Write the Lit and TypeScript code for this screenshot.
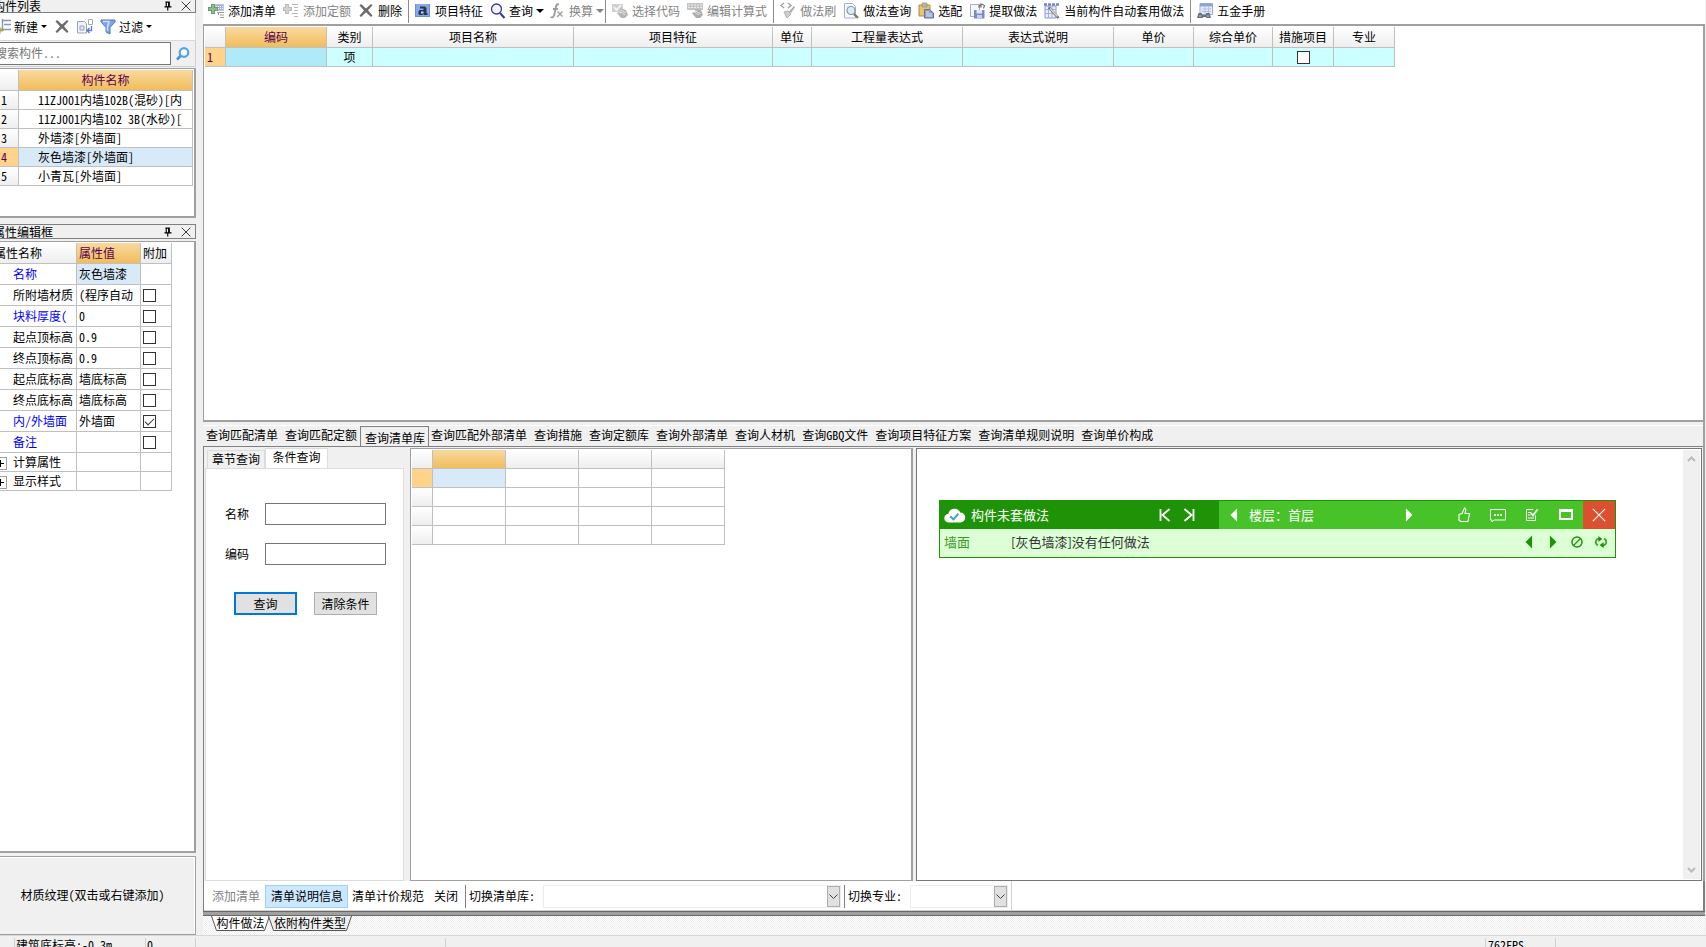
import { LitElement, html, svg, css, nothing } from "lit";
import { customElement, property, state } from "lit/decorators.js";
import { classMap } from "lit/directives/class-map.js";

const baseText = css`
  :host {
    font: 12px/16px "Noto Sans Mono CJK SC", "Noto Sans CJK SC", sans-serif;
    color: #000;
  }
  *, *::before, *::after { box-sizing: border-box; }
  button, input, select { font: inherit; color: inherit; margin: 0; padding: 0; border-radius: 0; outline: none; }
  button { background: none; border: 0; white-space: nowrap; }
`;

const caret = svg`<path d="M0 0H8L4 4Z" fill="currentColor"/>`;
const cross = svg`<path d="M1.500 2.500L3 1l5 4.500L13 1l1.500 1.300L10 7.300l4.500 5.200L13 14 8 9.300 3 14l-1.500-1.300L6 7.500Z" fill="#6b6b6b"/>`;

const icons: Record<string, unknown> = {
  addList: svg`<path d="M7 1h9v7H7z" fill="#b9c6e6"/><path d="M8 2h7v5H8z" fill="#a4b2dc"/><path d="M8 3.500h7M8 5.500h7" stroke="#eef2fb" stroke-dasharray="1 1"/><path d="M3 1h4v3h3v4H7v3H3V8H0V4h3z" fill="#6b9a6b"/><path d="M4 2h2v3h3v2H6v3H4V7H1V5h3z" fill="#8cc088"/><path d="M9 9.500h7M12 12h4M12 14.500h4M10.500 9v3" stroke="#9a9a9a"/>`,
  addQuota: svg`<path d="M2 1h4v3h3v4H6v3H2V8H0V4h2z" fill="#bdbdbd"/><path d="M3 2h2v3h3v2H5v3H3V7H1V5h2z" fill="#d2d2d2"/><path d="M9 1.500h6M11 4.500h4M11 7.500h4M9 10.500h6M11 13.500h4" stroke="#b8b8b8"/>`,
  cross,
  feature: svg`<path d="M0 1h15v13H0z" fill="#6d8fe0"/><path d="M1 1h13v12H1z" fill="#86a8f0"/><path d="M5 3.500h5l1.500 1.500v5h1v2H9l-.5-1-1 1H4.500L3.500 11V8.500L4.500 7H8.500V5.500H5z" fill="#2d3547"/><path d="M6 8.500h2.500v2H6z" fill="#cfdcfa"/>`,
  search: svg`<circle cx="6.500" cy="6" r="5" fill="#f4f5ff" stroke="#3b3a9c" stroke-width="1.300"/><path d="M10 10l4.500 5" stroke="#3b3a9c" stroke-width="2"/>`,
  fx: svg`<path d="M9 1.500C6.500.5 6 3 5.500 6L4.500 11c-.5 3-2 4-4 3M3 6h5" stroke="#9a9a9a" stroke-width="1.800" fill="none"/><path d="M7.500 8.500l5 5M12.500 8.500L7 14" stroke="#a5a5a5" stroke-width="1.600"/>`,
  pick: svg`<path d="M0 1h11v8H0z" fill="#d0d0d0"/><path d="M2 4l2.500 3L9 2" stroke="#f7f7f7" stroke-width="1.500" fill="none"/><path d="M8 5l6 2 2 5-3 3H9L5 10l2-1 2 1.500z" fill="#b4b4b4"/><path d="M9 7l5 3M9 9l4 3" stroke="#e6e6e6"/>`,
  editExpr: svg`<path d="M0 0h16v7H0z" fill="#c4c4c4"/><path d="M1 2h14M1 4.500h14" stroke="#efefef" stroke-dasharray="2 1"/><path d="M8 6l6 1 2 5-3 3H9L5 10l2-1 2 1z" fill="#adadad"/><path d="M9 8l5 3M9 10l3 2" stroke="#e0e0e0"/>`,
  brush: svg`<path d="M4 0L1 2.500 4 5M8 0l3 2.500L8 5" stroke="#a6a6a6" stroke-width="1.500" fill="none"/><path d="M14 3l1 1-4 6-2-1.500z" fill="#a9a9a9"/><path d="M4 9l4-1 3 3-4 4z" fill="#cdcdcd" stroke="#adadad"/>`,
  docSearch: svg`<path d="M1.500.5h8l3 3V15h-11z" fill="#fff" stroke="#9db0d0"/><path d="M3 4h6" stroke="#c4d3e8"/><circle cx="8" cy="7.500" r="4" fill="#d9ecfa" stroke="#8695ab" stroke-width="1.200"/><path d="M11 11l4 4" stroke="#8a7752" stroke-width="2.400"/>`,
  paste: svg`<path d="M1 2h11v11H1z" fill="#e6c56c" stroke="#b08c3e"/><path d="M4 0h5v4H4z" fill="#b5b5b5" stroke="#888" stroke-width=".6"/><path d="M6.500 6.500h5l4 3.500V15h-9z" fill="#8f9bc0" stroke="#66749b"/><path d="M8 9h3M8 11h6M8 13h6" stroke="#e6ecf9"/>`,
  extract: svg`<path d="M1.500 1.500h9v12h-9z" fill="#f6f8fd" stroke="#a2aed0"/><path d="M5 7h10.500v8.500H5z" fill="#7f86cf"/><path d="M7.500 7H13v3.500H7.500z" fill="#e5e8fb"/><path d="M8 12h5v3.500H8z" fill="#c8cdf2"/><path d="M9 4h3V1l3.500 1.500-1 3M12 1.500L9.500 3" stroke="#777" stroke-width="1.200" fill="none"/>`,
  auto: svg`<path d="M1 3h11v12H1z" fill="#e9eefb" stroke="#8c98cc"/><path d="M4.500 3v12M8 3v12M1 6.500h11M1 10.500h11" stroke="#a3add9"/><path d="M0 1.500h15" stroke="#7883be" stroke-width="2.500" stroke-dasharray="3 1"/><path d="M5 4.500l9.500 10.500" stroke="#5a6490" stroke-width="2.600"/><path d="M6 5.500l7.500 8" stroke="#efdfa6" stroke-width="1.400"/>`,
  manual: svg`<path d="M3 .5h12.500v11H3z" fill="#e6ecf7" stroke="#9dafd4"/><path d="M3 .5h12.500v3H3z" fill="#8da4d8"/><path d="M5 6h9M5 8.500h9M8 4v7M11.500 4v7" stroke="#b4c1dd"/><path d="M0 15l1.500-5h3l1 2h3l1-2h3l1.500 5H9.500l-1-1h-2l-1 1z" fill="#66707c"/><path d="M2 13h2.500M9.500 13H12" stroke="#c5ced8"/>`,
  newItem: svg`<path d="M7 1.500h9M9 5.500h7M7 10.500h9M7.500 0v11" stroke="#8199bb" stroke-width="1.400"/><path d="M3 8h2v2h3v2H5v3H3v-3H0v-2h3z" fill="#d1b93c" stroke="#93832a" stroke-width=".7"/>`,
  copyItem: svg`<path d="M.5 2.500h7l2 2V14h-9z" fill="#eef1f7" stroke="#98a3b8"/><path d="M3 7h4v4H3z" fill="#dfe5f0" stroke="#9aa6bd"/><path d="M11.500.5h4v5h-4z" fill="#fff" stroke="#a2acc2"/><path d="M14.500 7v4.500h-4M12.500 9L10 11.500l2.500 2.500" stroke="#5f78cc" stroke-width="1.300" fill="none"/>`,
  filter: svg`<path d="M1 1h14v2L10 8.500V15l-4-2V8.500L1 3z" fill="#7fa3ea" stroke="#5577c4"/><path d="M3 2.500h6L7.500 8v4" stroke="#cfe0ff" stroke-width="1.500" fill="none"/>`,
  find: svg`<circle cx="9" cy="6.500" r="4.300" fill="#f4faff" stroke="#4fa6e4" stroke-width="2.200"/><path d="M5.500 10L2 13.500" stroke="#4494d8" stroke-width="2.600"/>`,
  pin: svg`<path d="M5 3.500h5M6 3v6M9.500 3v6M8.700 3v6M4 9h8M7.700 9v4" stroke="#000" stroke-width="1.300"/>`,
  close: svg`<path d="M3 3l10 10M13 3L3 13" stroke="#222" stroke-width="1"/>`,
  cloud: svg`<path d="M4 14a3.500 3.500 0 01-.5-7 5 5 0 019.500-1A4 4 0 0113 14z" fill="#fff"/><path d="M5 9l2.500 2.500L11.500 7" stroke="#3aa0dc" stroke-width="1.600" fill="none"/>`,
  first: svg`<path d="M3.500 2v12M12.500 2l-7 6 7 6" stroke="#fff" stroke-width="1.800" fill="none"/>`,
  last: svg`<path d="M12.500 2v12M3.500 2l7 6-7 6" stroke="#fff" stroke-width="1.800" fill="none"/>`,
  left: svg`<path d="M11.500.5v15L4 8z" fill="currentColor"/>`,
  right: svg`<path d="M4.500.5v15L12 8z" fill="currentColor"/>`,
  thumb: svg`<path d="M3 7.500l3-1L8.500 1c1.500 0 1.700 1.500.5 5.500h4.500L12 14.500H4.500L3 13z" fill="none" stroke="#fff" stroke-width="1.100"/>`,
  chat: svg`<path d="M.5 2.500h15v10.500H4l-2 2V13H.5z" fill="none" stroke="#fff"/><path d="M4 8h2M7 8h2M10 8h2" stroke="#fff" stroke-width="1.400"/>`,
  note: svg`<path d="M9 2.500H2.500v11h9V8.500" fill="none" stroke="#fff"/><path d="M4 5.500h3M4 8h2.500M4 11h6" stroke="#fff"/><path d="M7 6l2 2.500L13.500 2.500" stroke="#fff" stroke-width="1.800" fill="none"/>`,
  max: svg`<path d="M2 3.500h12v8.500H2z" fill="none" stroke="#fff" stroke-width="2"/><path d="M1 3.500h14" stroke="#fff" stroke-width="3"/>`,
  exit: svg`<path d="M1 1l14 14M15 1L1 15" stroke="#fff" stroke-width="1.300"/>`,
  ban: svg`<circle cx="8" cy="8" r="5.800" fill="none" stroke="#1f9307" stroke-width="1.700"/><path d="M4 12l8-8" stroke="#1f9307" stroke-width="1.500"/>`,
  refresh: svg`<path d="M4.500 12C.5 9.500 1.500 4.500 6 4M11.500 4c4 2.500 3 7.500-1.500 8" fill="none" stroke="#3fa32b" stroke-width="2"/><path d="M5 1l4.500 3.500L5 8zM11 8l-4.500 3.500L11 15z" fill="#1f9307"/>`,
};

@customElement("ui-icon")
export class UiIcon extends LitElement {
  @property() name = "";
  static styles = css`
    :host { display: inline-flex; flex: none; width: 16px; height: 16px; }
    svg { width: 100%; height: 100%; display: block; overflow: visible; }
  `;
  render() {
    return html`<svg viewBox="0 0 16 16" aria-hidden="true">${icons[this.name]}</svg>`;
  }
}

interface Tool { icon: string; label: string; off?: boolean; menu?: boolean; sep?: boolean; }

@customElement("main-toolbar")
export class MainToolbar extends LitElement {
  private tools: Tool[] = [
    { icon: "addList", label: "添加清单" },
    { icon: "addQuota", label: "添加定额", off: true },
    { icon: "cross", label: "删除", sep: true },
    { icon: "feature", label: "项目特征" },
    { icon: "search", label: "查询", menu: true },
    { icon: "fx", label: "换算", off: true, menu: true, sep: true },
    { icon: "pick", label: "选择代码", off: true },
    { icon: "editExpr", label: "编辑计算式", off: true, sep: true },
    { icon: "brush", label: "做法刷", off: true },
    { icon: "docSearch", label: "做法查询" },
    { icon: "paste", label: "选配" },
    { icon: "extract", label: "提取做法" },
    { icon: "auto", label: "当前构件自动套用做法", sep: true },
    { icon: "manual", label: "五金手册" },
  ];
  static styles = [baseText, css`
    :host { display: flex; align-items: center; height: 24px; padding: 0 0 2px 5px; background: #fff; overflow: hidden; }
    button { display: flex; align-items: center; gap: 4px; margin-right: 7px; }
    button:disabled { color: #838383; }
    .menu { width: 8px; height: 4px; }
    .menued { gap: 3px; margin-right: 6px; }
    .menued.last { margin-right: 2px; }
    .sep { width: 1px; height: 24px; background: #8c8c8c; margin: 0 6px 0 -1px; flex: none; }
  `];
  render() {
    return this.tools.map((t) => html`
      <button class=${classMap({ menued: !!t.menu, last: !!t.sep })} ?disabled=${t.off}>
        <ui-icon name=${t.icon}></ui-icon><span>${t.label}</span>
        ${t.menu ? html`<svg class="menu" viewBox="0 0 8 4">${caret}</svg>` : nothing}
      </button>
      ${t.sep ? html`<span class="sep"></span>` : nothing}`);
  }
}

const gridStyles = css`
  table { border-collapse: separate; border-spacing: 0; table-layout: fixed; }
  th, td { padding: 0; font-weight: normal; white-space: nowrap; overflow: hidden; border: solid #c0c0c0; border-width: 0 1px 1px 0; }
  th { background: linear-gradient(#fff, #eee); }
  .hot { background: linear-gradient(#f9d9a0, #f1bd5b); color: #5a0050; }
  .cur { background: #ffd38c; color: #5a0050; }
  .sel { background: #d8e9f8; }
  .tick { appearance: none; display: block; width: 13px; height: 13px; border: 1px solid #333; background: #fff; }
  .tick:checked::after { content: ""; display: block; width: 9px; height: 5px; margin: 2px 1px; border: solid #333; border-width: 0 0 1px 1px; transform: rotate(-45deg); }
`;

@customElement("side-panels")
export class SidePanels extends LitElement {
  private parts = ["11ZJ001内墙102B(混砂)[内", "11ZJ001内墙102 3B(水砂)[", "外墙漆[外墙面]", "灰色墙漆[外墙面]", "小青瓦[外墙面]"];
  private props: { name: string; value?: string; blue?: boolean; tick?: boolean; on?: boolean; group?: boolean }[] = [
    { name: "名称", value: "灰色墙漆", blue: true },
    { name: "所附墙材质", value: "(程序自动", tick: true },
    { name: "块料厚度(", value: "0", blue: true, tick: true },
    { name: "起点顶标高", value: "0.9", tick: true },
    { name: "终点顶标高", value: "0.9", tick: true },
    { name: "起点底标高", value: "墙底标高", tick: true },
    { name: "终点底标高", value: "墙底标高", tick: true },
    { name: "内/外墙面", value: "外墙面", blue: true, tick: true, on: true },
    { name: "备注", blue: true, tick: true },
    { name: "计算属性", group: true },
    { name: "显示样式", group: true },
  ];
  @state() private current = 3;
  static styles = [baseText, gridStyles, css`
    :host { display: flex; flex-direction: column; background: #f0f0f0; min-height: 0; }
    .title { display: flex; align-items: center; height: 15px; margin-top: 6px; border: 1px solid #7f7f7f; border-left: 0; flex: none; }
    .title.top { height: 13px; margin-top: 0; border-top: 0; }
    .title h2 { flex: 1; margin: 0; font: inherit; line-height: 12px; padding-left: 1px; }
    .title button { width: 18px; height: 12px; display: flex; justify-content: center; align-items: center; }
    .title ui-icon { width: 14px; height: 14px; }
    .tools { display: flex; align-items: center; height: 28px; padding-left: 3px; background: #fff; border-bottom: 1px solid #d9d9d9; border-right: 1px solid #d9d9d9; flex: none; }
    .tools button { display: flex; align-items: center; gap: 3px; margin-right: 7px; }
    .menu { width: 6px; height: 3px; }
    .find { display: flex; height: 26px; border: solid #d0d0d0; border-width: 0 1px 1px 0; flex: none; padding: 1px 0; }
    .find input { flex: 1; min-width: 0; border: 1px solid #767676; background: #fff; padding: 0 2px 2px; }
    .find input::placeholder { color: #767676; opacity: 1; }
    .find button { width: 24px; display: flex; align-items: center; justify-content: center; }
    .frame { background: #fff; border: solid #a0a0a0; border-width: 1px 2px 2px 0; overflow: hidden; }
    .list { height: 150px; margin-top: 1px; flex: none; padding-top: 1px; }
    .props { flex: 1; min-height: 0; margin: 2px 0 3px; padding-top: 1px; }
    .list table { width: 201px; }
    .list tr { height: 19px; }
    .list thead tr { height: 21px; }
    .list td:first-child { padding-left: 9px; background: linear-gradient(#fff, #eee); }
    .list td:first-child.cur { background: #ffd38c; }
    .list td + td { padding-left: 19px; }
    .list th:first-child, .list td:first-child { width: 27px; }
    .props table { width: 180px; }
    .props tr { height: 21px; }
    .props tr.group { height: 19px; }
    .props th { text-align: left; padding-left: 2px; }
    .props td { padding-left: 21px; }
    .props td + td { padding-left: 2px; }
    .blue { color: #00f; }
    .exp { display: inline-block; width: 13px; height: 13px; margin: 0 6px 0 -19px; border: 1px solid #a0a0a0; vertical-align: middle; background: linear-gradient(#000, #000) center / 7px 1px no-repeat, linear-gradient(#000, #000) center / 1px 7px no-repeat; }
    .texture { height: 79px; border: 1px solid #a0a0a0; border-left: 0; flex: none; background: #f0f0f0; box-shadow: inset 0 1px #fff, inset -1px 0 #fff; padding: 0 2px 2px 0; }
  `];
  render() {
    const title = (text: string, top = false) => html`
      <div class="title ${top ? "top" : ""}"><h2>${text}</h2>
        <button aria-label="固定"><ui-icon name="pin"></ui-icon></button>
        <button aria-label="关闭"><ui-icon name="close"></ui-icon></button></div>`;
    const menu = html`<svg class="menu" viewBox="0 0 8 4">${caret}</svg>`;
    return html`
      ${title("构件列表", true)}
      <div class="tools">
        <button><ui-icon name="newItem"></ui-icon>新建${menu}</button>
        <button aria-label="删除"><ui-icon name="cross"></ui-icon></button>
        <button aria-label="复制"><ui-icon name="copyItem"></ui-icon></button>
        <button><ui-icon name="filter"></ui-icon>过滤${menu}</button>
      </div>
      <div class="find">
        <input type="text" placeholder="搜索构件..." aria-label="搜索构件" />
        <button aria-label="搜索"><ui-icon name="find"></ui-icon></button>
      </div>
      <div class="frame list"><table>
        <thead><tr><th></th><th class="hot">构件名称</th></tr></thead>
        <tbody>${this.parts.map((p, i) => html`<tr @click=${() => (this.current = i)}>
          <td class=${classMap({ cur: i === this.current })}>${i + 1}</td>
          <td class=${classMap({ sel: i === this.current })}>${p}</td></tr>`)}</tbody>
      </table></div>
      ${title("属性编辑框")}
      <div class="frame props"><table>
        <colgroup><col width="85" /><col width="64" /><col width="31" /></colgroup>
        <thead><tr><th>属性名称</th><th class="hot">属性值</th><th>附加</th></tr></thead>
        <tbody>${this.props.map((p, i) => html`<tr class=${classMap({ group: !!p.group })}>
          <td class=${classMap({ blue: !!p.blue })}>${p.group ? html`<span class="exp"></span>` : nothing}${p.name}</td>
          <td class=${classMap({ sel: i === 0 })}>${p.value ?? nothing}</td>
          <td>${p.tick ? html`<input class="tick" type="checkbox" aria-label=${p.name} .checked=${!!p.on} />` : nothing}</td>
        </tr>`)}</tbody>
      </table></div>
      <button class="texture">材质纹理(双击或右键添加)</button>`;
  }
}

@customElement("bill-grid")
export class BillGrid extends LitElement {
  private cols: [string, number][] = [["编码", 101], ["类别", 46], ["项目名称", 201], ["项目特征", 199], ["单位", 39], ["工程量表达式", 151], ["表达式说明", 151], ["单价", 80], ["综合单价", 79], ["措施项目", 61], ["专业", 61]];
  static styles = [baseText, gridStyles, css`
    :host { display: block; background: #fff; border: solid #a0a0a0; border-width: 2px 2px 2px 1px; padding: 1px; overflow: hidden; min-height: 0; }
    table { width: 1190px; }
    tr { height: 19px; text-align: center; }
    thead tr { height: 21px; }
    td { background: #ccffff; }
    td.cur { background: #ffd38c; text-align: left; padding-left: 2px; }
    td.code { background: #aeeaf8; }
    .tick { margin: auto; }
  `];
  render() {
    return html`<table>
      <colgroup><col width="21" />${this.cols.map((c) => html`<col width=${c[1]} />`)}</colgroup>
      <thead><tr><th></th>${this.cols.map((c, i) => html`<th class=${i ? "" : "hot"}>${c[0]}</th>`)}</tr></thead>
      <tbody><tr><td class="cur">1</td>${this.cols.map((c, i) => html`<td class=${i ? "" : "code"}>${
        i === 1 ? "项" : i === 9 ? html`<input class="tick" type="checkbox" aria-label="措施项目" />` : nothing}</td>`)}</tr></tbody>
    </table>`;
  }
}

@customElement("check-window")
export class CheckWindow extends LitElement {
  static styles = [baseText, css`
    :host { display: block; border: 1px solid #1f9307; background: #dcffd5; font-family: "Noto Sans CJK SC", sans-serif; font-size: 13px; color: #333; }
    .bar { display: flex; height: 28px; background: #48c229; color: #fff; align-items: stretch; }
    .name { display: flex; align-items: center; flex: 0 0 279px; background: #1f9307; padding: 0 18px 0 4px; }
    .name ui-icon { width: 20px; height: 20px; margin-right: 7px; }
    .grow { flex: 1; }
    .bar button, .row button { display: flex; align-items: center; justify-content: center; width: 24px; }
    .floor { display: flex; flex: 1; align-items: center; padding-left: 3px; min-width: 0; }
    .floor span { flex: 0 0 151px; padding-left: 3px; }
    .acts { display: flex; }
    .acts button { width: 34px; }
    .acts .exit { width: 32px; background: #dc5030; }
    .name .nav ui-icon { width: 16px; height: 16px; margin: 0; }
    .row { display: flex; align-items: center; height: 28px; padding: 0 2px 2px 4px; }
    .row b { font-weight: normal; color: #3c9a2a; flex: 0 0 67px; }
    .row button { color: #1f9307; }
    .row ui-icon, .floor ui-icon, .exit ui-icon { width: 14px; height: 14px; }
  `];
  render() {
    const b = (icon: string, label: string, cls = "") => html`<button class=${cls} aria-label=${label}><ui-icon name=${icon}></ui-icon></button>`;
    return html`
      <div class="bar">
        <div class="name"><ui-icon name="cloud"></ui-icon><span class="grow">构件未套做法</span>
          ${b("first", "第一个", "nav")}${b("last", "最后一个", "nav")}</div>
        <div class="floor">${b("left", "上一层")}<span>楼层：首层</span>${b("right", "下一层")}</div>
        <div class="acts">${b("thumb", "赞")}${b("chat", "反馈")}${b("note", "记录")}${b("max", "最大化")}${b("exit", "关闭", "exit")}</div>
      </div>
      <div class="row"><b>墙面</b><span class="grow">[灰色墙漆]没有任何做法</span>
        ${b("left", "上一条")}${b("right", "下一条")}${b("ban", "忽略")}${b("refresh", "刷新")}</div>`;
  }
}

@customElement("query-area")
export class QueryArea extends LitElement {
  private tabs = ["查询匹配清单", "查询匹配定额", "查询清单库", "查询匹配外部清单", "查询措施", "查询定额库", "查询外部清单", "查询人材机", "查询GBQ文件", "查询项目特征方案", "查询清单规则说明", "查询单价构成"];
  @state() private active = 2;
  static styles = [baseText, gridStyles, css`
    :host { display: flex; flex-direction: column; min-height: 0; background: #f0f0f0; border-right: 2px solid #a0a0a0; }
    .tabs { display: flex; align-items: flex-end; height: 25px; padding-left: 3px; border-bottom: 1px solid #808080; background: linear-gradient(#fff, #fff) 0 3px / 100% 1px no-repeat; flex: none; gap: 7px; }
    .tabs button { height: 22px; line-height: 20px; padding-bottom: 1px; }
    .tabs .on { height: 20px; line-height: 19px; border: 1px solid #808080; border-bottom: 0; padding: 1px 3px 0 4px; margin: 0 -5px 0 -4px; }
    .body { flex: 1; min-height: 0; display: flex; border-left: 1px solid #808080; padding-top: 1px; }
    .cond { width: 200px; padding-left: 1px; display: flex; flex-direction: column; flex: none; }
    .subtabs { display: flex; align-items: flex-end; height: 20px; padding-left: 2px; }
    .subtabs button { height: 18px; width: 58px; border: 1px solid #dcdcdc; border-bottom: 0; padding-bottom: 2px; }
    .subtabs .on { width: 63px; height: 21px; background: #fff; margin-bottom: -1px; padding-bottom: 4px; }
    .form { flex: 1; background: #fff; border: 1px solid #dcdcdc; padding: 34px 17px 0 19px; }
    .field { display: flex; align-items: center; height: 22px; margin-bottom: 18px; }
    .field label { width: 40px; }
    .field input { flex: 1; min-width: 0; height: 22px; border: 1px solid #767676; background: #fff; padding: 0 4px; }
    .btns { display: flex; gap: 17px; padding: 9px 0 0 9px; }
    .btns button { width: 63px; height: 23px; border: 1px solid #adadad; background: #e1e1e1; }
    .btns .primary { border: 2px solid #0078d7; }
    .cells { flex: 0 1 503px; margin-left: 6px; background: #fff; border: solid #a0a0a0; border-width: 1px 2px 1px 1px; padding: 1px; overflow: hidden; }
    .cells table { width: 313px; }
    .cells tr { height: 19px; }
    .cells tbody td:first-child { background: linear-gradient(#fff, #eee); }
    .cells tbody td.cur:first-child { background: #ffd38c; }
    .info { flex: 1; position: relative; display: flex; justify-content: flex-end; margin: 0 1px 0 3px; background: #fff; border: 1px solid #767676; padding: 1px; }
    .scroll { width: 17px; background: #f0f0f0; display: flex; flex-direction: column; justify-content: space-between; align-items: center; padding: 6px 0; }
    .scroll svg { width: 9px; height: 6px; }
    check-window { position: absolute; top: 51px; left: 22px; right: 85px; }
  `];
  render() {
    const chev = (d: string) => html`<svg viewBox="0 0 9 6"><path d=${d} fill="none" stroke="#bbb" stroke-width="2" /></svg>`;
    return html`
      <div class="tabs" role="tablist">${this.tabs.map((t, i) => html`<button role="tab" aria-selected=${i === this.active}
        class=${classMap({ on: i === this.active })} @click=${() => (this.active = i)}>${t}</button>`)}</div>
      <div class="body">
        <section class="cond">
          <div class="subtabs" role="tablist"><button role="tab">章节查询</button><button role="tab" class="on">条件查询</button></div>
          <div class="form">
            <div class="field"><label for="name">名称</label><input id="name" type="text" /></div>
            <div class="field"><label for="code">编码</label><input id="code" type="text" /></div>
            <div class="btns"><button class="primary">查询</button><button>清除条件</button></div>
          </div>
        </section>
        <section class="cells"><table>
          <colgroup><col width="21" /><col width="73" /><col width="73" /><col width="73" /><col width="73" /></colgroup>
          <thead><tr><th></th><th class="hot"></th><th></th><th></th><th></th></tr></thead>
          <tbody>${[0, 1, 2, 3].map((r) => html`<tr><td class=${r ? "" : "cur"}></td><td class=${r ? "" : "sel"}></td><td></td><td></td><td></td></tr>`)}</tbody>
        </table></section>
        <section class="info">
          <div class="scroll">${chev("M1 5l3.500-3.500L8 5")}${chev("M1 1l3.500 3.500L8 1")}</div>
          <check-window></check-window>
        </section>
      </div>`;
  }
}

@customElement("app-root")
export class AppRoot extends LitElement {
  static styles = [baseText, css`
    :host { display: flex; flex-direction: column; height: 100vh; overflow: hidden; background: #f0f0f0; }
    .work { flex: 1; min-height: 0; display: flex; gap: 7px; }
    /* The window hangs slightly over the left edge of the screen. */
    side-panels { width: 204px; margin-left: -8px; flex: none; }
    main { flex: 1; min-width: 0; display: flex; flex-direction: column; padding-right: 1px; }
    bill-grid { flex: 392 1 0; }
    query-area { flex: 459 1 0; }
    .foot { display: flex; align-items: center; height: 30px; background: #fff; border: solid #808080; border-width: 0 2px 0 1px; box-shadow: inset 0 -1px #d0d0d0; padding-left: 8px; flex: none; }
    .foot button { height: 24px; }
    .foot .off { color: #838383; }
    .foot .on { margin: 0 4px 0 5px; padding: 0 4px 0 5px; height: 23px; border: 1px solid #99d1ff; background: #cce8ff; }
    .foot .last { margin: 0 7px 0 10px; }
    .sep { width: 1px; height: 23px; background: #808080; margin-right: 3px; }
    .pick { position: relative; display: flex; height: 23px; margin: 0 3px 0 8px; }
    .pick.lib { width: 298px; }
    .pick.pro { width: 98px; }
    .pick select { width: 100%; appearance: none; border: 1px solid #ececec; background: #fff; }
    .arrow { position: absolute; top: 1px; right: 1px; bottom: 1px; width: 13px; border: 1px solid #adadad; background: #e1e1e1; display: flex; align-items: center; justify-content: center; pointer-events: none; }
    .arrow svg { width: 9px; height: 5px; }
    .end { width: 1px; height: 30px; background: #d0d0d0; }
    .band { height: 5px; background: #a0a0a0; border: solid #696969; border-width: 1px 0; flex: none; }
    .sheets { display: flex; height: 19px; padding-left: 8px; flex: none; background: repeating-conic-gradient(#ededed 0 25%, #fff 0 50%) 0 0 / 2px 2px; }
    .sheets button { position: relative; height: 15px; width: 59px; }
    .sheets .wide { width: 84px; margin-left: -2px; }
    .sheets svg { position: absolute; inset: 0; width: 100%; height: 100%; }
    .sheets span { position: relative; display: block; line-height: 12px; padding-bottom: 2px; }
    .status { display: flex; height: 12px; border-top: 1px solid #d7d7d7; padding-top: 2px; overflow: hidden; flex: none; background: #f0f0f0; }
    .status span { border-right: 1px solid #d0d0d0; height: 20px; line-height: 14px; padding-left: 1px; white-space: nowrap; flex: none; }
    .s1 { width: 15px; }
    .s2 { width: 131px; }
    .s3 { width: 50px; }
    .s4 { width: 250px; }
    .status .s5 { flex: 1; }
    .status .s6 { width: 70px; padding-left: 2px; }
    .status .s7 { width: 150px; border: 0; }
  `];
  render() {
    const arrow = html`<span class="arrow"><svg viewBox="0 0 9 5"><path d="M.5.5l4 4 4-4" fill="none" stroke="#444" /></svg></span>`;
    return html`
      <div class="work">
        <side-panels></side-panels>
        <main>
          <main-toolbar></main-toolbar>
          <bill-grid></bill-grid>
          <query-area></query-area>
          <div class="foot">
            <button class="off" disabled>添加清单</button>
            <button class="on">清单说明信息</button>
            <button>清单计价规范</button>
            <button class="last">关闭</button>
            <span class="sep"></span><label for="lib">切换清单库:</label>
            <div class="pick lib"><select id="lib"><option></option></select>${arrow}</div>
            <span class="sep"></span><label for="pro">切换专业:</label>
            <div class="pick pro"><select id="pro"><option></option></select>${arrow}</div>
            <span class="end"></span>
          </div>
          <div class="band"></div>
          <div class="sheets">
            <button><svg viewBox="0 0 59 15" preserveAspectRatio="none"><path d="M.5 0l5 14.500h48L58.500 0" fill="#fff" stroke="#555" /></svg><span>构件做法</span></button>
            <button class="wide"><svg viewBox="0 0 84 15" preserveAspectRatio="none"><path d="M.5 0l5 14.500h73L83.500 0" fill="#f0f0f0" stroke="#555" /></svg><span>依附构件类型</span></button>
          </div>
        </main>
      </div>
      <div class="status"><span class="s1"></span><span class="s2">建筑底标高:-0.3m</span><span class="s3">0</span><span class="s4"></span><span class="s5"></span><span class="s6">762FPS</span><span class="s7"></span></div>`;
  }
}
